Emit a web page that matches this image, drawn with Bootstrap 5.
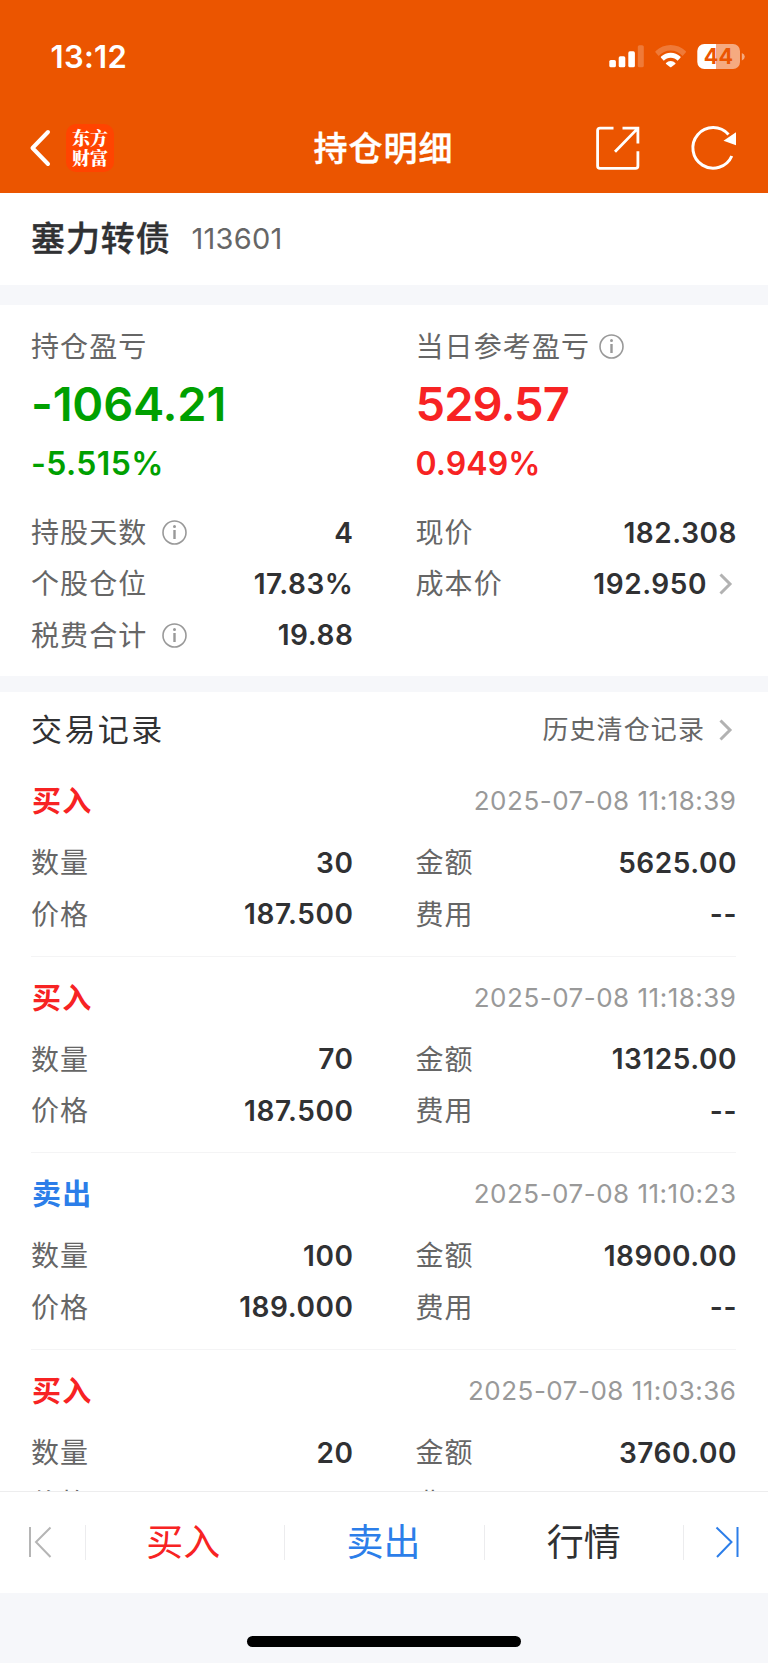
<!DOCTYPE html>
<html lang="zh-CN">
<head>
<meta charset="utf-8">
<meta name="viewport" content="width=device-width, initial-scale=1">
<title>持仓明细</title>
<link href="https://cdn.jsdelivr.net/npm/bootstrap@5.3.0/dist/css/bootstrap.min.css" rel="stylesheet">
<style>
  body { font-family: Inter, "Noto Sans CJK SC", sans-serif; color: #303133; background: #f6f7fa; line-height: 1; white-space: nowrap; }
  svg { display: block; flex: none; overflow: visible; }
  .screen { width: 768px; height: 1663px; }
  .top-area { height: 192.5px; background: #eb5500; color: #fff; }
  .status-row { height: 112px; padding: 0 23px 0 50.5px; }
  .clock { font-size: 31px; font-weight: 600; letter-spacing: .3px; }
  .title-row { height: 72px; padding: 0 31px 0 30px; }
  .page-title { font-size: 34px; font-weight: 500; letter-spacing: 1px; padding-top: 2px; -webkit-text-stroke: .4px; }
  .side { width: 240px; }
  .app-logo { width: 48px; height: 48px; border-radius: 10px; background: #ff4400; font-family: "Noto Serif CJK SC", "Noto Sans CJK SC", serif; font-weight: 900; font-size: 18px; line-height: 20.5px; margin-left: 16px; padding-bottom: 2px; }
  .refresh { margin-left: 51px; }
  .block-name { height: 92.5px; padding: 0 31px; }
  .stock { font-size: 34px; font-weight: 500; letter-spacing: .9px; -webkit-text-stroke: .4px; }
  .stock-code { font-size: 29px; color: #666; margin-left: 21px; letter-spacing: .2px; }
  .band-a { height: 20px; }
  .band-b { height: 16px; }
  .pair { display: grid; grid-template-columns: 322px 321px; justify-content: space-between; padding: 0 31.5px 0 31px; }
  .summary { height: 371px; }
  .cap { height: 82px; font-size: 28px; letter-spacing: 1.1px; color: #666; padding-top: 2px; }
  .cap svg { margin: -2px 0 0 9px; }
  .big { height: 33px; font-size: 47px; font-weight: 600; letter-spacing: -.2px; padding-bottom: 1px; }
  .big.up { letter-spacing: -.9px; }
  .pct { height: 87px; font-size: 32px; font-weight: 600; letter-spacing: .4px; }
  .pct.up { letter-spacing: .1px; }
  .kv { height: 51.3px; display: flex; align-items: center; justify-content: space-between; }
  .kv span { font-size: 28px; letter-spacing: 1.1px; color: #666; padding-top: 1px; }
  .kv span svg { margin: -1px 0 0 14.5px; }
  .kv b { font-size: 28px; font-weight: 600; letter-spacing: .55px; margin-right: -.5px; }
  .go-cost { margin: 0 6px 0 7px; }
  .go-history { margin: 0 6px 0 7px; }
  .down { color: #00a000; } .up { color: #f72323; } .sell { color: #2c7ee9; }
  .history { flex: 1 1 0; min-height: 0; overflow: hidden; }
  .history-head { height: 67.5px; padding: 0 31px; }
  .history-title { font-size: 31px; letter-spacing: 2.4px; }
  .history-link { font-size: 26px; letter-spacing: 1.1px; color: #666; }
  .record { height: 196.6px; }
  .record-head { height: 77.6px; padding: 6px 31.5px 0 32px; }
  .side-label { font-size: 29px; font-weight: 700; letter-spacing: 1.2px; padding-top: 1px; }
  .stamp { font-size: 26px; color: #999; letter-spacing: .5px; }
  .rule { height: 1px; margin: 16px 32px 0 31px; background: #f4f4f5; }
  .actions { height: 102px; border-top: 1px solid #ededee; }
  .actions .tab { flex: 1 1 0; font-size: 37px; text-align: center; }
  .tab-buy { text-indent: -4px; }
  .tab-sell { text-indent: -2px; }
  .vline { width: 1px; height: 35px; background: #ececee; }
  .home-zone { height: 70px; padding-top: 42.5px; }
  .home-bar { width: 274px; height: 11px; border-radius: 6px; background: #000; }
</style>
</head>
<body>
<svg width="0" height="0" class="position-absolute">
  <defs>
    <g id="info"><circle cx="12.5" cy="12.5" r="11.5" fill="none" stroke="#999" stroke-width="1.6"/><circle cx="12.5" cy="6.4" r="1.5" fill="#999"/><path d="M12.5 10v9" stroke="#999" stroke-width="2.4"/></g>
    <path id="chev" d="M1.5 1.5 11 11 1.5 20.5" fill="none" stroke="#b2b2b2" stroke-width="3"/>
  </defs>
</svg>
<main class="screen d-flex flex-column overflow-hidden">
  <header class="top-area">
    <div class="status-row d-flex align-items-center justify-content-between">
      <div class="clock">13:12</div>
      <svg width="137" height="26" viewBox="0 0 137 26" fill="#fff">
        <rect x="1.3" y="17" width="6.6" height="7.3" rx="1.6"/><rect x="10.7" y="13.3" width="6.6" height="11" rx="1.6"/><rect x="20.3" y="8.3" width="6.6" height="16" rx="1.6"/><rect x="29.8" y="2.2" width="6" height="22.1" rx="1.6" opacity=".22"/>
        <path d="M47.6 10.4l3.1 3.3a16 16 0 0 1 23.9 0l3.1-3.3q.7-.8-.1-1.5a21.5 21.5 0 0 0-29.9 0q-.8.7-.1 1.5z" opacity=".22" transform="translate(0 -.8)"/>
        <path d="M53 15.8l2.8 3a9.2 9.2 0 0 1 13.8 0l2.8-3q.6-.7-.1-1.3a14 14 0 0 0-19.2 0q-.7.6-.1 1.3z" transform="translate(0 -1)"/>
        <path d="M58 20.6q-.4.5.1.9l3.9 3q.7.5 1.4 0l3.9-3q.5-.4.1-.9a6.6 6.6 0 0 0-9.4 0z" transform="translate(0 -.6)"/>
        <path d="M108 1H125a7 7 0 0 1 7 7V19a7 7 0 0 1-7 7H108z" opacity=".5"/>
        <path d="M96.3 1H108v25H96.3a7 7 0 0 1-7-7V8a7 7 0 0 1 7-7z"/>
        <path d="M133.8 10q3 1.2 3 3.7t-3 3.7z" opacity=".5"/>
        <text x="110.6" y="21" text-anchor="middle" font-size="21.5" font-weight="700" fill="#eb5500" letter-spacing=".3">44</text>
      </svg>
    </div>
    <div class="title-row d-flex align-items-center justify-content-between">
      <div class="side d-flex align-items-center">
        <svg width="20" height="36" viewBox="0 0 20 36"><path d="M18 2 2.5 18 18 34" fill="none" stroke="#fff" stroke-width="4" stroke-linecap="round" stroke-linejoin="round"/></svg>
        <div class="app-logo d-flex flex-column align-items-center justify-content-center"><div>东方</div><div>财富</div></div>
      </div>
      <div class="page-title">持仓明细</div>
      <div class="side d-flex align-items-center justify-content-end">
        <svg width="44" height="44" viewBox="0 0 44 44" fill="none" stroke="#fff" stroke-width="2.8"><path d="M17.5 2.2H4Q1.6 2.2 1.6 4.6V40Q1.6 42.4 4 42.4H39.5Q41.9 42.4 41.9 40V25.2M26.5 2.2H41.9V17.4M41.5 2.6 19 25.8"/></svg>
        <svg width="46" height="46" viewBox="0 0 46 46" class="refresh"><path d="M40.8 31A20.3 20.3 0 1 1 37.5 9.6" fill="none" stroke="#fff" stroke-width="3"/><path d="M45 7.2V20.2L32.5 15.8z" fill="#fff"/></svg>
      </div>
    </div>
  </header>

  <section class="block-name bg-white d-flex align-items-center">
    <div class="stock">塞力转债</div><div class="stock-code">113601</div>
  </section>
  <div class="band-a"></div>

  <section class="summary bg-white">
    <div class="pair">
      <div>
        <div class="cap d-flex align-items-center">持仓盈亏</div>
        <div class="big d-flex align-items-center down">-1064.21</div>
        <div class="pct d-flex align-items-center down">-5.515%</div>
        <div class="kv"><span class="d-flex align-items-center">持股天数<svg width="25" height="25"><use href="#info"/></svg></span><b>4</b></div>
        <div class="kv"><span>个股仓位</span><b>17.83%</b></div>
        <div class="kv"><span class="d-flex align-items-center">税费合计<svg width="25" height="25"><use href="#info"/></svg></span><b>19.88</b></div>
      </div>
      <div>
        <div class="cap d-flex align-items-center">当日参考盈亏<svg width="25" height="25"><use href="#info"/></svg></div>
        <div class="big d-flex align-items-center up">529.57</div>
        <div class="pct d-flex align-items-center up">0.949%</div>
        <div class="kv"><span>现价</span><b>182.308</b></div>
        <div class="kv"><span>成本价</span><b class="d-flex align-items-center">192.950<svg class="go-cost" width="17" height="22" viewBox="-5 0 17 22"><use href="#chev"/></svg></b></div>
      </div>
    </div>
  </section>
  <div class="band-b"></div>

  <section class="history bg-white">
    <div class="history-head d-flex align-items-center justify-content-between pt-2">
      <div class="history-title">交易记录</div>
      <div class="history-link d-flex align-items-center">历史清仓记录<svg class="go-history" width="19" height="22" viewBox="-7 0 19 22"><use href="#chev"/></svg></div>
    </div>
    <article class="record">
      <div class="record-head d-flex align-items-center justify-content-between"><div class="side-label up">买入</div><time class="stamp">2025-07-08 11:18:39</time></div>
      <div class="pair"><div class="kv"><span>数量</span><b>30</b></div><div class="kv"><span>金额</span><b>5625.00</b></div><div class="kv"><span>价格</span><b>187.500</b></div><div class="kv"><span>费用</span><b>--</b></div></div>
      <div class="rule"></div>
    </article>
    <article class="record">
      <div class="record-head d-flex align-items-center justify-content-between"><div class="side-label up">买入</div><time class="stamp">2025-07-08 11:18:39</time></div>
      <div class="pair"><div class="kv"><span>数量</span><b>70</b></div><div class="kv"><span>金额</span><b>13125.00</b></div><div class="kv"><span>价格</span><b>187.500</b></div><div class="kv"><span>费用</span><b>--</b></div></div>
      <div class="rule"></div>
    </article>
    <article class="record">
      <div class="record-head d-flex align-items-center justify-content-between"><div class="side-label sell">卖出</div><time class="stamp">2025-07-08 11:10:23</time></div>
      <div class="pair"><div class="kv"><span>数量</span><b>100</b></div><div class="kv"><span>金额</span><b>18900.00</b></div><div class="kv"><span>价格</span><b>189.000</b></div><div class="kv"><span>费用</span><b>--</b></div></div>
      <div class="rule"></div>
    </article>
    <article class="record">
      <div class="record-head d-flex align-items-center justify-content-between"><div class="side-label up">买入</div><time class="stamp">2025-07-08 11:03:36</time></div>
      <div class="pair"><div class="kv"><span>数量</span><b>20</b></div><div class="kv"><span>金额</span><b>3760.00</b></div><div class="kv"><span>价格</span></div><div class="kv"><span>费用</span></div></div>
    </article>
  </section>

  <nav class="actions bg-white d-flex align-items-center">
    <svg width="85" height="32" viewBox="0 0 85 32" fill="none" stroke="#b5b5b5" stroke-width="2"><path d="M30 0V30M50.5 .5 36 15 50.5 30"/></svg>
    <div class="vline"></div>
    <div class="tab tab-buy up">买入</div>
    <div class="vline"></div>
    <div class="tab tab-sell sell">卖出</div>
    <div class="vline"></div>
    <div class="tab">行情</div>
    <div class="vline"></div>
    <svg width="84" height="32" viewBox="0 0 84 32" fill="none" stroke="#2c7ee9" stroke-width="2"><path d="M53.5 0V30M32.5 .5 47.5 15 33 30"/></svg>
  </nav>
  <div class="home-zone"><div class="home-bar mx-auto"></div></div>
</main>
<script src="https://cdn.jsdelivr.net/npm/bootstrap@5.3.0/dist/js/bootstrap.bundle.min.js"></script>
</body>
</html>
